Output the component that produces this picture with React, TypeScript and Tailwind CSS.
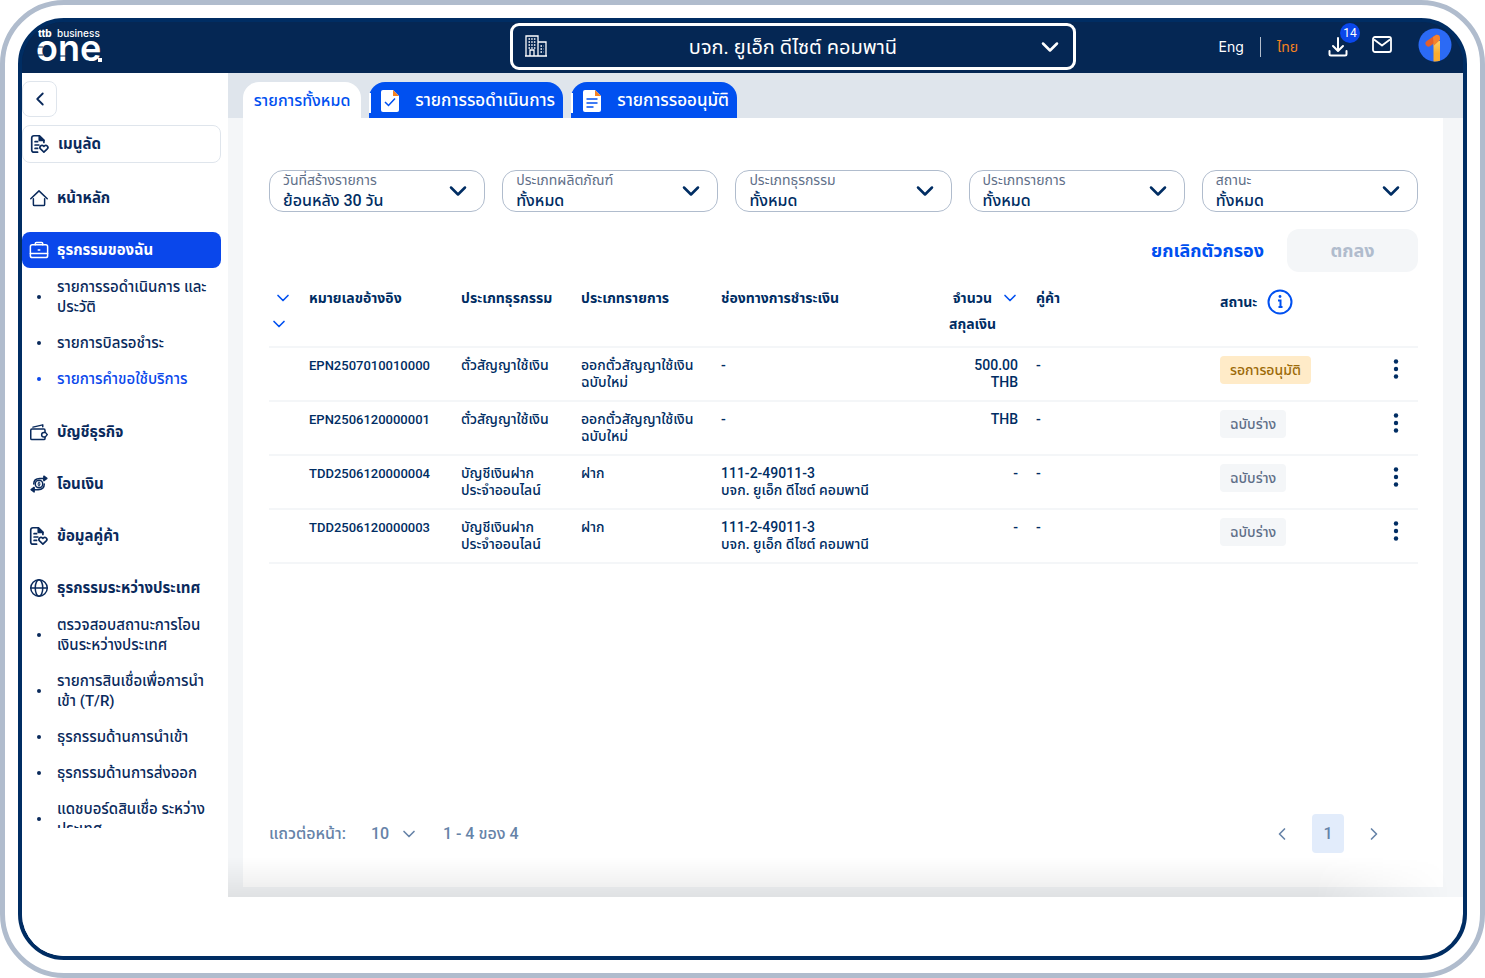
import { useState } from 'react';
import type { ReactNode } from 'react';
import { ChevronDown, ChevronLeft, ChevronRight } from 'lucide-react';
import clsx from 'clsx';

type IconName = 'document' | 'home' | 'briefcase' | 'wallet' | 'transfer' | 'globe';

interface SubItem {
  lines: string[];
  active?: boolean;
}

interface MenuItem {
  label: string;
  icon: IconName;
  active?: boolean;
  children?: SubItem[];
}

interface Transaction {
  ref: string;
  type: string[];
  kind: string[];
  channel: string[];
  amount: string[];
  partner: string;
  status: 'pending' | 'draft';
}

const menu: MenuItem[] = [
  { label: 'หน้าหลัก', icon: 'home' },
  {
    label: 'ธุรกรรมของฉัน',
    icon: 'briefcase',
    active: true,
    children: [
      { lines: ['รายการรอดำเนินการ และ', 'ประวัติ'] },
      { lines: ['รายการบิลรอชำระ'] },
      { lines: ['รายการคำขอใช้บริการ'], active: true },
    ],
  },
  { label: 'บัญชีธุรกิจ', icon: 'wallet' },
  { label: 'โอนเงิน', icon: 'transfer' },
  { label: 'ข้อมูลคู่ค้า', icon: 'document' },
  {
    label: 'ธุรกรรมระหว่างประเทศ',
    icon: 'globe',
    children: [
      { lines: ['ตรวจสอบสถานะการโอน', 'เงินระหว่างประเทศ'] },
      { lines: ['รายการสินเชื่อเพื่อการนำ', 'เข้า (T/R)'] },
      { lines: ['ธุรกรรมด้านการนำเข้า'] },
      { lines: ['ธุรกรรมด้านการส่งออก'] },
      { lines: ['แดชบอร์ดสินเชื่อ ระหว่าง', 'ประเทศ'] },
    ],
  },
];

const filters = [
  { id: 'created', label: 'วันที่สร้างรายการ', value: 'ย้อนหลัง 30 วัน' },
  { id: 'product', label: 'ประเภทผลิตภัณฑ์', value: 'ทั้งหมด' },
  { id: 'transaction', label: 'ประเภทธุรกรรม', value: 'ทั้งหมด' },
  { id: 'kind', label: 'ประเภทรายการ', value: 'ทั้งหมด' },
  { id: 'status', label: 'สถานะ', value: 'ทั้งหมด' },
];

const transactions: Transaction[] = [
  {
    ref: 'EPN2507010010000',
    type: ['ตั๋วสัญญาใช้เงิน'],
    kind: ['ออกตั๋วสัญญาใช้เงิน', 'ฉบับใหม่'],
    channel: ['-'],
    amount: ['500.00', 'THB'],
    partner: '-',
    status: 'pending',
  },
  {
    ref: 'EPN2506120000001',
    type: ['ตั๋วสัญญาใช้เงิน'],
    kind: ['ออกตั๋วสัญญาใช้เงิน', 'ฉบับใหม่'],
    channel: ['-'],
    amount: ['THB'],
    partner: '-',
    status: 'draft',
  },
  {
    ref: 'TDD2506120000004',
    type: ['บัญชีเงินฝาก', 'ประจำออนไลน์'],
    kind: ['ฝาก'],
    channel: ['111-2-49011-3', 'บจก. ยูเอ็ก ดีไซต์ คอมพานี'],
    amount: ['-'],
    partner: '-',
    status: 'draft',
  },
  {
    ref: 'TDD2506120000003',
    type: ['บัญชีเงินฝาก', 'ประจำออนไลน์'],
    kind: ['ฝาก'],
    channel: ['111-2-49011-3', 'บจก. ยูเอ็ก ดีไซต์ คอมพานี'],
    amount: ['-'],
    partner: '-',
    status: 'draft',
  },
];

const statusConfig: Record<Transaction['status'], { label: string; className: string }> = {
  pending: { label: 'รอการอนุมัติ', className: 'bg-[#ffebc8] text-[#9c6a08]' },
  draft: { label: 'ฉบับร่าง', className: 'bg-[#f4f6f8] text-[#5f6f88]' },
};

const iconPaths: Record<IconName, ReactNode> = {
  document: (
    <g transform="translate(-2.4 -1.2) scale(1.12)">
      <path d="M10 21.5H5.5A2.5 2.5 0 0 1 3 19V4.500A2.500 2.500 0 0 1 5.500 2H12l5.500 5.500V10" />
      <path d="M12 2v5.500h5.500Z" fill="currentColor" />
      <path d="M7 9h3M7 13h4.500M7 17h3" />
      <path d="m17.500 21.500-4-3.800a2.400 2.400 0 0 1 3.500-3.500l.500.500.500-.500a2.400 2.400 0 0 1 3.500 3.500Z" />
    </g>
  ),
  home: (
    <>
      <path d="M1 13 12 2.500 23 13" />
      <path d="M4.500 13v7.500A1.500 1.500 0 0 0 6 22h12a1.500 1.500 0 0 0 1.500-1.500V13" />
    </>
  ),
  briefcase: (
    <>
      <rect x="0.500" y="5" width="23" height="17" rx="2.500" />
      <path d="M7 5V3.500A1.500 1.500 0 0 1 8.500 2h7A1.500 1.500 0 0 1 17 3.500V5M.500 16.500h23M11 12h2" />
    </>
  ),
  wallet: (
    <>
      <path d="M20 12V9.500A1.500 1.500 0 0 0 18.500 8h-16A1.500 1.500 0 0 0 1 9.500v11A1.500 1.500 0 0 0 2.500 22h16a1.500 1.500 0 0 0 1.500-1.500V19" />
      <path d="M4 5.500 17 2.500V5M18.500 12.500H20.500l2.500 3-2.500 3h-2a3 3 0 0 1 0-6Z" />
    </>
  ),
  transfer: (
    <>
      <circle cx="12" cy="12" r="5" />
      <path d="M13.500 10.500c-1-1-3-.500-2.700.700.300 1.100 2.700.600 2.700 1.800 0 1-2 1.300-3 .300M12 9v6" strokeWidth="1.200" />
      <path d="M5 12c0-4.500 3-7.500 8-7.500h8M19 12c0 4.500-3 7.500-8 7.500H3" />
      <path d="m18.500 1.500 4 3-4 3ZM5.500 16.500l-4 3 4 3Z" fill="currentColor" />
    </>
  ),
  globe: (
    <>
      <circle cx="12" cy="12" r="11" />
      <ellipse cx="12" cy="12" rx="5" ry="11" />
      <path d="M1 12h22" />
    </>
  ),
};

function Icon({ name }: { name: IconName }) {
  return (
    <svg
      viewBox="0 0 24 24"
      className="size-[18px] shrink-0 overflow-visible"
      fill="none"
      stroke="currentColor"
      strokeWidth="2"
      strokeLinecap="round"
      strokeLinejoin="round"
      aria-hidden="true"
    >
      {iconPaths[name]}
    </svg>
  );
}

function Lines({ lines }: { lines: string[] }) {
  return (
    <>
      {lines.map((line) => (
        <span key={line} className="block whitespace-nowrap">
          {line}
        </span>
      ))}
    </>
  );
}

function Logo() {
  return (
    <svg
      viewBox="0 0 72 40"
      className="h-10 w-[72px] overflow-visible font-['Inter',sans-serif]"
      fill="#fff"
      role="img"
      aria-label="ttb business one"
    >
      <text x="1" y="10" fontSize="10" fontWeight="800">
        ttb
      </text>
      <text x="20" y="10" fontSize="10" fontWeight="500">
        business
      </text>
      <text x="-1" y="34" fontSize="36" fontWeight="600">
        one
      </text>
      <path d="M0 20h6M0 28h6M22 29h7" stroke="#052754" strokeWidth="1" />
      <rect x="61" y="31" width="4" height="4" />
    </svg>
  );
}

function Header() {
  return (
    <header className="grid h-[51px] shrink-0 grid-cols-[488fr_566fr_387fr] items-center bg-[#052754] pb-0.5 text-white">
      <a href="#" className="w-fit pl-[15px]">
        <Logo />
      </a>

      <div className="relative">
        <svg
          viewBox="0 0 24 24"
          className="pointer-events-none absolute top-[11px] left-[14px] size-6"
          fill="none"
          stroke="currentColor"
          strokeWidth="1.300"
          aria-hidden="true"
        >
          <path d="M2 22V2h12v20M14 8h8v14M1 22h22M6 22v-6h4v6" />
          <path d="M4.500 5h7M4.500 8h7M4.500 11h7M4.500 14h7M16.500 12h3M16.500 15h3M16.500 18h3" strokeDasharray="1.500 1.200" />
        </svg>
        <select
          aria-label="บริษัท"
          className="block h-[47px] w-full appearance-none rounded-[9px] border-[3px] border-white bg-transparent px-12 text-center text-xl text-white [text-align-last:center]"
        >
          <option>บจก. ยูเอ็ก ดีไซต์ คอมพานี</option>
        </select>
        <ChevronDown className="pointer-events-none absolute top-2.5 right-3 size-7" strokeWidth={2.2} />
      </div>

      <div className="flex items-center justify-end pr-[11px]">
        <button className="font-['Inter',sans-serif] text-sm">Eng</button>
        <span className="mx-4 h-5 w-px bg-white/70" />
        <button className="text-sm text-[#f58220]">ไทย</button>
        <button className="relative ml-[30px]" aria-label="ดาวน์โหลด">
          <svg viewBox="0 0 20 20" className="size-5" fill="none" stroke="currentColor" strokeWidth="2" strokeLinecap="round" strokeLinejoin="round">
            <path d="M10 1v12M5 9l5 5 5-5M1.500 14v3A1.500 1.500 0 0 0 3 18.500h14a1.500 1.500 0 0 0 1.500-1.500v-3" />
          </svg>
          <span className="absolute -top-[14px] -right-3 flex size-5 items-center justify-center rounded-full bg-[#0a47eb] text-xs">
            14
          </span>
        </button>
        <button className="ml-6" aria-label="ข้อความ">
          <svg viewBox="0 0 20 18" className="mb-1 h-[18px] w-5" fill="none" stroke="currentColor" strokeWidth="1.800" strokeLinejoin="round">
            <rect x="1" y="1" width="18" height="15" rx="2" />
            <path d="m2 3.500 8 6 8-6" />
          </svg>
        </button>
        <button className="ml-[26px]" aria-label="โปรไฟล์">
          <svg viewBox="0 0 34 34" className="mb-1 size-[34px]">
            <defs>
              <linearGradient id="one-stem" x1="0" y1="0" x2="0" y2="1">
                <stop offset="0" stopColor="#fbd06a" />
                <stop offset="0.600" stopColor="#fbac2f" />
              </linearGradient>
            </defs>
            <circle cx="17" cy="17" r="16.500" fill="#2b6af5" />
            <path d="M15.500 13H22v19.700a16.500 16.500 0 0 1-6.500.700Z" fill="url(#one-stem)" />
            <path d="M10.500 15.500 18.500 10" stroke="#e45f2b" strokeWidth="6" strokeLinecap="round" />
            <path d="m15 9 3.500-2.300Q22 6.500 22 10v2L15.500 18v-3Z" fill="#f5822c" />
          </svg>
        </button>
      </div>
    </header>
  );
}

function Sidebar() {
  return (
    <aside className="flex w-[206px] shrink-0 flex-col items-start bg-white pt-2 pb-32 text-[#0a2a5c]">
      <button
        aria-label="ย่อเมนู"
        className="flex h-9 w-[35px] shrink-0 items-center justify-center rounded-lg border border-[#dfe5ec]"
      >
        <ChevronLeft size={22} />
      </button>
      <nav className="mt-2 min-h-0 w-[199px] flex-1 overflow-hidden">
        <a
          href="#"
          className="flex h-[38px] items-center gap-[9px] rounded-lg border border-[#dfe5ec] pl-2 text-[15px] font-bold"
        >
          <Icon name="document" />
          เมนูลัด
        </a>
        <ul className="mt-[17px] space-y-4">
          {menu.map((item) => (
            <li key={item.label}>
              <a
                href="#"
                className={clsx(
                  'flex h-9 items-center gap-[9px] rounded-lg pl-2 text-[15px] font-bold',
                  item.active && 'bg-[#0a47eb] text-white'
                )}
              >
                <Icon name={item.icon} />
                {item.label}
              </a>
              {item.children && (
                <ul className="py-px">
                  {item.children.map((child) => (
                    <li key={child.lines[0]}>
                      <a
                        href="#"
                        className={clsx(
                          'flex items-center py-2 text-[15px] leading-5 font-medium',
                          child.active && 'text-[#0a47eb]'
                        )}
                      >
                        <span className="mr-4 ml-[15px] size-1 shrink-0 rounded-full bg-current" />
                        <span>
                          <Lines lines={child.lines} />
                        </span>
                      </a>
                    </li>
                  ))}
                </ul>
              )}
            </li>
          ))}
        </ul>
      </nav>
    </aside>
  );
}

function TabIcon({ checked }: { checked?: boolean }) {
  return (
    <svg viewBox="0 0 18 22" className="h-[22px] w-[18px]" fill="none" aria-hidden="true">
      <path d="M2 0h10l6 6v14a2 2 0 0 1-2 2H2a2 2 0 0 1-2-2V2a2 2 0 0 1 2-2Z" fill="#fff" />
      <path d="M12 0v6h6Z" fill="#f58220" />
      <path
        d={checked ? 'm4 12 3.500 3.500L14 8.500' : 'M3.500 9h11M3.500 13h11M3.500 17h7'}
        stroke="#0050f0"
        strokeWidth="1.500"
      />
    </svg>
  );
}

function Tabs() {
  const blueTab =
    'relative flex h-9 items-center justify-between rounded-t-2xl bg-[#0050f0] pt-0.5 pr-2 pl-3 text-[17px] font-medium text-white';

  return (
    <div role="tablist" className="flex h-[45px] items-end gap-2 bg-[#dfe5ec] pl-[15px]">
      <button
        role="tab"
        aria-selected="true"
        className="h-9 w-[118px] rounded-t-2xl bg-white pt-0.5 text-base font-medium whitespace-nowrap text-[#0050f0]"
      >
        รายการทั้งหมด
      </button>
      <button role="tab" aria-selected="false" className={clsx(blueTab, 'w-[194px]')}>
        <span className="absolute top-[11px] left-0 h-5 w-0.5 bg-white" />
        <TabIcon checked />
        รายการรอดำเนินการ
      </button>
      <button role="tab" aria-selected="false" className={clsx(blueTab, 'w-[166px]')}>
        <span className="absolute top-[11px] left-0 h-5 w-0.5 bg-white" />
        <TabIcon />
        รายการรออนุมัติ
      </button>
    </div>
  );
}

function Filters() {
  return (
    <>
      <div className="grid grid-cols-5 gap-[17px]">
        {filters.map(({ id, label, value }) => (
          <div key={id} className="relative h-[42px] rounded-[14px] border border-[#b0bccd] px-[13px]">
            <label htmlFor={id} className="block text-sm leading-[18px] whitespace-nowrap text-[#5f6f88]">
              {label}
            </label>
            <select
              id={id}
              className="mt-px block h-[22px] w-full appearance-none bg-transparent text-base leading-[22px] font-medium text-[#002d63]"
            >
              <option>{value}</option>
            </select>
            <ChevronDown
              className="pointer-events-none absolute top-1.5 right-3 text-[#002d63]"
              size={28}
              strokeWidth={2.2}
            />
          </div>
        ))}
      </div>
      <div className="mt-[17px] flex justify-end gap-[23px]">
        <button className="text-lg font-bold text-[#0050f0]">ยกเลิกตัวกรอง</button>
        <button disabled className="h-[43px] w-[131px] rounded-xl bg-[#f4f6f8] text-lg font-bold text-[#b0bccd]">
          ตกลง
        </button>
      </div>
    </>
  );
}

function TransactionTable() {
  return (
    <table className="mt-[13px] w-full table-fixed text-left text-sm text-[#002d63]">
      <colgroup>
        <col className="w-[40px]" />
        <col className="w-[152px]" />
        <col className="w-[120px]" />
        <col className="w-[140px]" />
        <col className="w-[160px]" />
        <col className="w-[155px]" />
        <col className="w-[184px]" />
        <col className="w-[154px]" />
        <col className="w-[44px]" />
      </colgroup>
      <thead>
        <tr className="h-[62px] border-b-2 border-[#f4f6f8] align-top leading-[26px]">
          <th>
            <button aria-label="เรียงลำดับ" className="ml-1 flex h-[26px] items-center text-[#0050f0]">
              <ChevronDown size={20} />
            </button>
            <button aria-label="เรียงลำดับสกุลเงิน" className="flex h-[26px] items-center text-[#0050f0]">
              <ChevronDown size={20} />
            </button>
          </th>
          <th>หมายเลขอ้างอิง</th>
          <th>ประเภทธุรกรรม</th>
          <th>ประเภทรายการ</th>
          <th>ช่องทางการชำระเงิน</th>
          <th>
            <button className="mr-4 ml-auto flex h-[26px] items-center gap-2">
              จำนวน
              <ChevronDown size={20} className="text-[#0050f0]" />
            </button>
            <span className="mr-10 block text-right">สกุลเงิน</span>
          </th>
          <th>คู่ค้า</th>
          <th>
            <span className="mt-1 flex items-center gap-2.5">
              สถานะ
              <button aria-label="คำอธิบายสถานะ">
                <svg viewBox="0 0 26 26" className="size-[26px]" fill="none" stroke="#0050f0" strokeWidth="2">
                  <circle cx="13" cy="13" r="11.500" />
                  <path d="M11 11.500h2.500v6.500M11.500 18h4" />
                  <circle cx="13" cy="7.500" r="1.400" fill="#0050f0" stroke="none" />
                </svg>
              </button>
            </span>
          </th>
          <th />
        </tr>
      </thead>
      <tbody>
        {transactions.map((row) => (
          <tr key={row.ref} className="h-[54px] border-b-2 border-[#f4f6f8] align-top leading-[17px] font-medium">
            <td />
            <td className="pt-[9px] text-[13px]">{row.ref}</td>
            <td className="pt-[9px]">
              <Lines lines={row.type} />
            </td>
            <td className="pt-[9px]">
              <Lines lines={row.kind} />
            </td>
            <td className="pt-[9px]">
              <Lines lines={row.channel} />
            </td>
            <td className="pt-[9px] pr-[18px] text-right">
              <Lines lines={row.amount} />
            </td>
            <td className="pt-[9px]">{row.partner}</td>
            <td className="pt-2">
              <span
                className={clsx(
                  'flex h-7 w-fit items-center rounded px-2.5 whitespace-nowrap',
                  statusConfig[row.status].className
                )}
              >
                {statusConfig[row.status].label}
              </span>
            </td>
            <td className="pt-[11px]">
              <button aria-label="ตัวเลือก" className="mx-auto block">
                <svg viewBox="0 0 6 20" className="h-5 w-1.5" fill="currentColor">
                  <circle cx="3" cy="2.500" r="2.200" />
                  <circle cx="3" cy="10" r="2.200" />
                  <circle cx="3" cy="17.500" r="2.200" />
                </svg>
              </button>
            </td>
          </tr>
        ))}
      </tbody>
    </table>
  );
}

function Pagination() {
  const [page] = useState(1);

  return (
    <footer className="mt-auto flex items-center text-base font-medium text-[#6683a8]">
      <label htmlFor="page-size">แถวต่อหน้า:</label>
      <div className="relative ml-[25px]">
        <select id="page-size" className="w-12 appearance-none bg-transparent">
          <option>10</option>
        </select>
        <ChevronDown size={20} className="pointer-events-none absolute top-0.5 right-0" />
      </div>
      <span className="ml-6">1 - 4 ของ 4</span>
      <div className="mr-[34px] ml-auto flex items-center gap-5">
        <button aria-label="ก่อนหน้า">
          <ChevronLeft size={20} />
        </button>
        <button className="h-[39px] w-8 rounded bg-[#e2ecfb]">{page}</button>
        <button aria-label="ถัดไป">
          <ChevronRight size={20} />
        </button>
      </div>
    </footer>
  );
}

export default function App() {
  return (
    <div className="flex h-screen rounded-[64px] border-[5px] border-[#b0bccd] bg-white p-[13px] font-['Roboto','Noto_Sans_Thai','Noto_Sans',sans-serif]">
      <div className="flex min-w-0 flex-1 flex-col overflow-hidden rounded-[46px] border-4 border-[#002d63] bg-[#052754]">
        <Header />
        <div className="flex min-h-0 flex-1 bg-white">
          <Sidebar />
          <main className="relative mb-[59px] flex min-w-0 flex-1 flex-col bg-[#f4f6f8]">
            <Tabs />
            <section className="mr-5 mb-2.5 ml-[15px] flex flex-1 flex-col bg-white pt-[52px] pr-[25px] pb-[34px] pl-[26px]">
              <Filters />
              <TransactionTable />
              <Pagination />
            </section>
            <div className="pointer-events-none absolute inset-x-0 bottom-0 h-10 bg-linear-to-t from-black/8 to-transparent [mask-image:linear-gradient(to_right,black_88%,transparent_99%)]" />
          </main>
        </div>
      </div>
    </div>
  );
}
